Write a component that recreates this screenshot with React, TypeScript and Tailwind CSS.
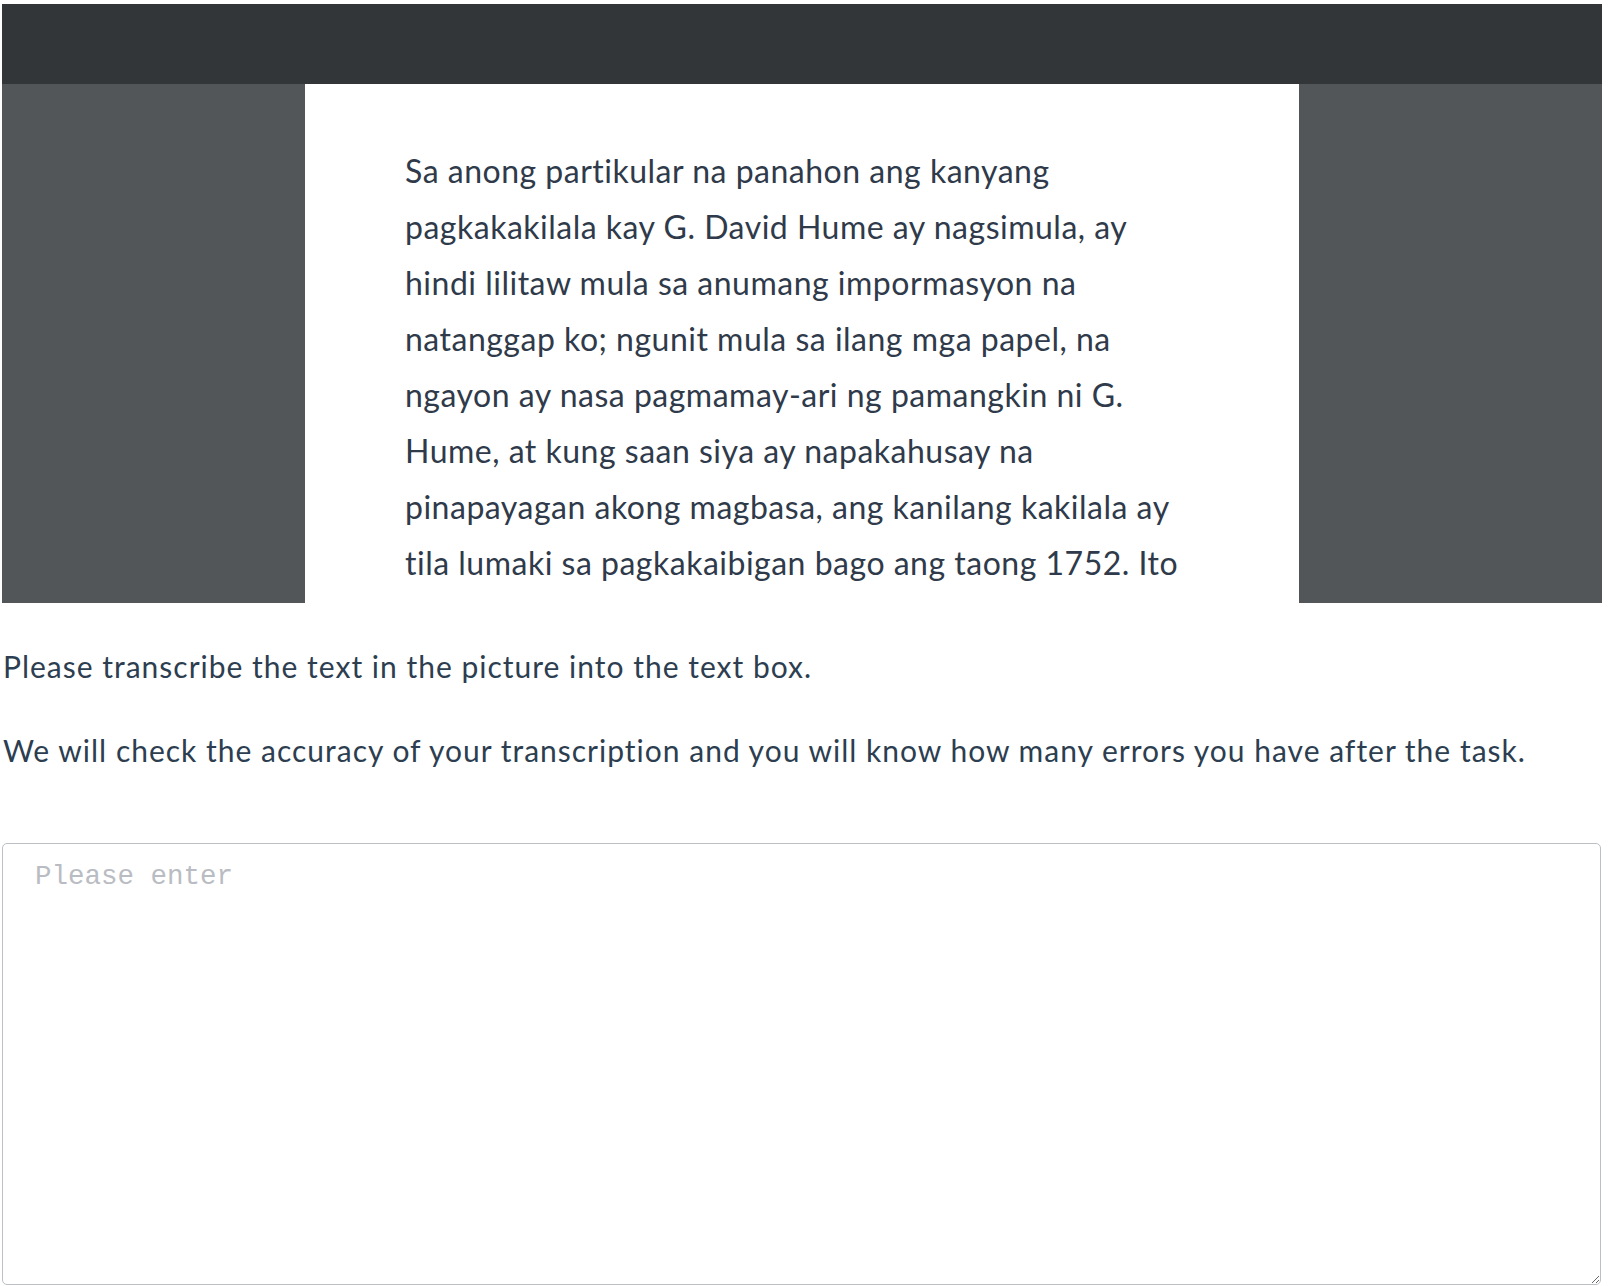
import React from "react";

const lines = [
  "Sa anong partikular na panahon ang kanyang",
  "pagkakakilala kay G. David Hume ay nagsimula, ay",
  "hindi lilitaw mula sa anumang impormasyon na",
  "natanggap ko; ngunit mula sa ilang mga papel, na",
  "ngayon ay nasa pagmamay-ari ng pamangkin ni G.",
  "Hume, at kung saan siya ay napakahusay na",
  "pinapayagan akong magbasa, ang kanilang kakilala ay",
  "tila lumaki sa pagkakaibigan bago ang taong 1752. Ito",
];

export default function App() {
  return (
    <div className="min-h-[1286px] bg-white" style={{ fontFamily: "Lato, 'Open Sans', sans-serif" }}>
      <div className="pt-[4px] pl-[2px]">
        <div className="flex h-[599px] w-[1600px] flex-col overflow-hidden">
          <div className="h-[80px] shrink-0 bg-[#333639]" />
          <div className="flex min-h-0 flex-1">
            <div className="w-[303px] shrink-0 bg-[#535659]" />
            <div className="min-w-0 flex-1 overflow-hidden bg-white pl-[100px] pt-[59px] text-[32px] leading-[56px] tracking-[0.5px] text-[#2f3a4a]">
              {lines.map((l, i) => (
                <div key={i} className="whitespace-nowrap">
                  {l}
                </div>
              ))}
            </div>
            <div className="w-[303px] shrink-0 bg-[#535659]" />
          </div>
        </div>
      </div>
      <div className="pl-[3px] text-[30px] tracking-[1px] text-[#2c3e50]">
        <p className="mt-[43px] leading-[40px]">Please transcribe the text in the picture into the text box.</p>
        <p className="mt-[44px] leading-[40px]">
          We will check the accuracy of your transcription and you will know how many errors you have after the task.
        </p>
      </div>
      <div className="pl-[2px] pr-[7px] pt-[73px]">
        <textarea
          placeholder="Please enter"
          className="block h-[442px] w-[1599px] rounded-[5px] border border-[#bcbfc5] px-[32px] py-[12px] text-[27.5px] leading-[41px] text-[#606266] outline-none placeholder:text-[#b9bcc2]"
          style={{ fontFamily: "'Liberation Mono', monospace" }}
        />
      </div>
    </div>
  );
}
